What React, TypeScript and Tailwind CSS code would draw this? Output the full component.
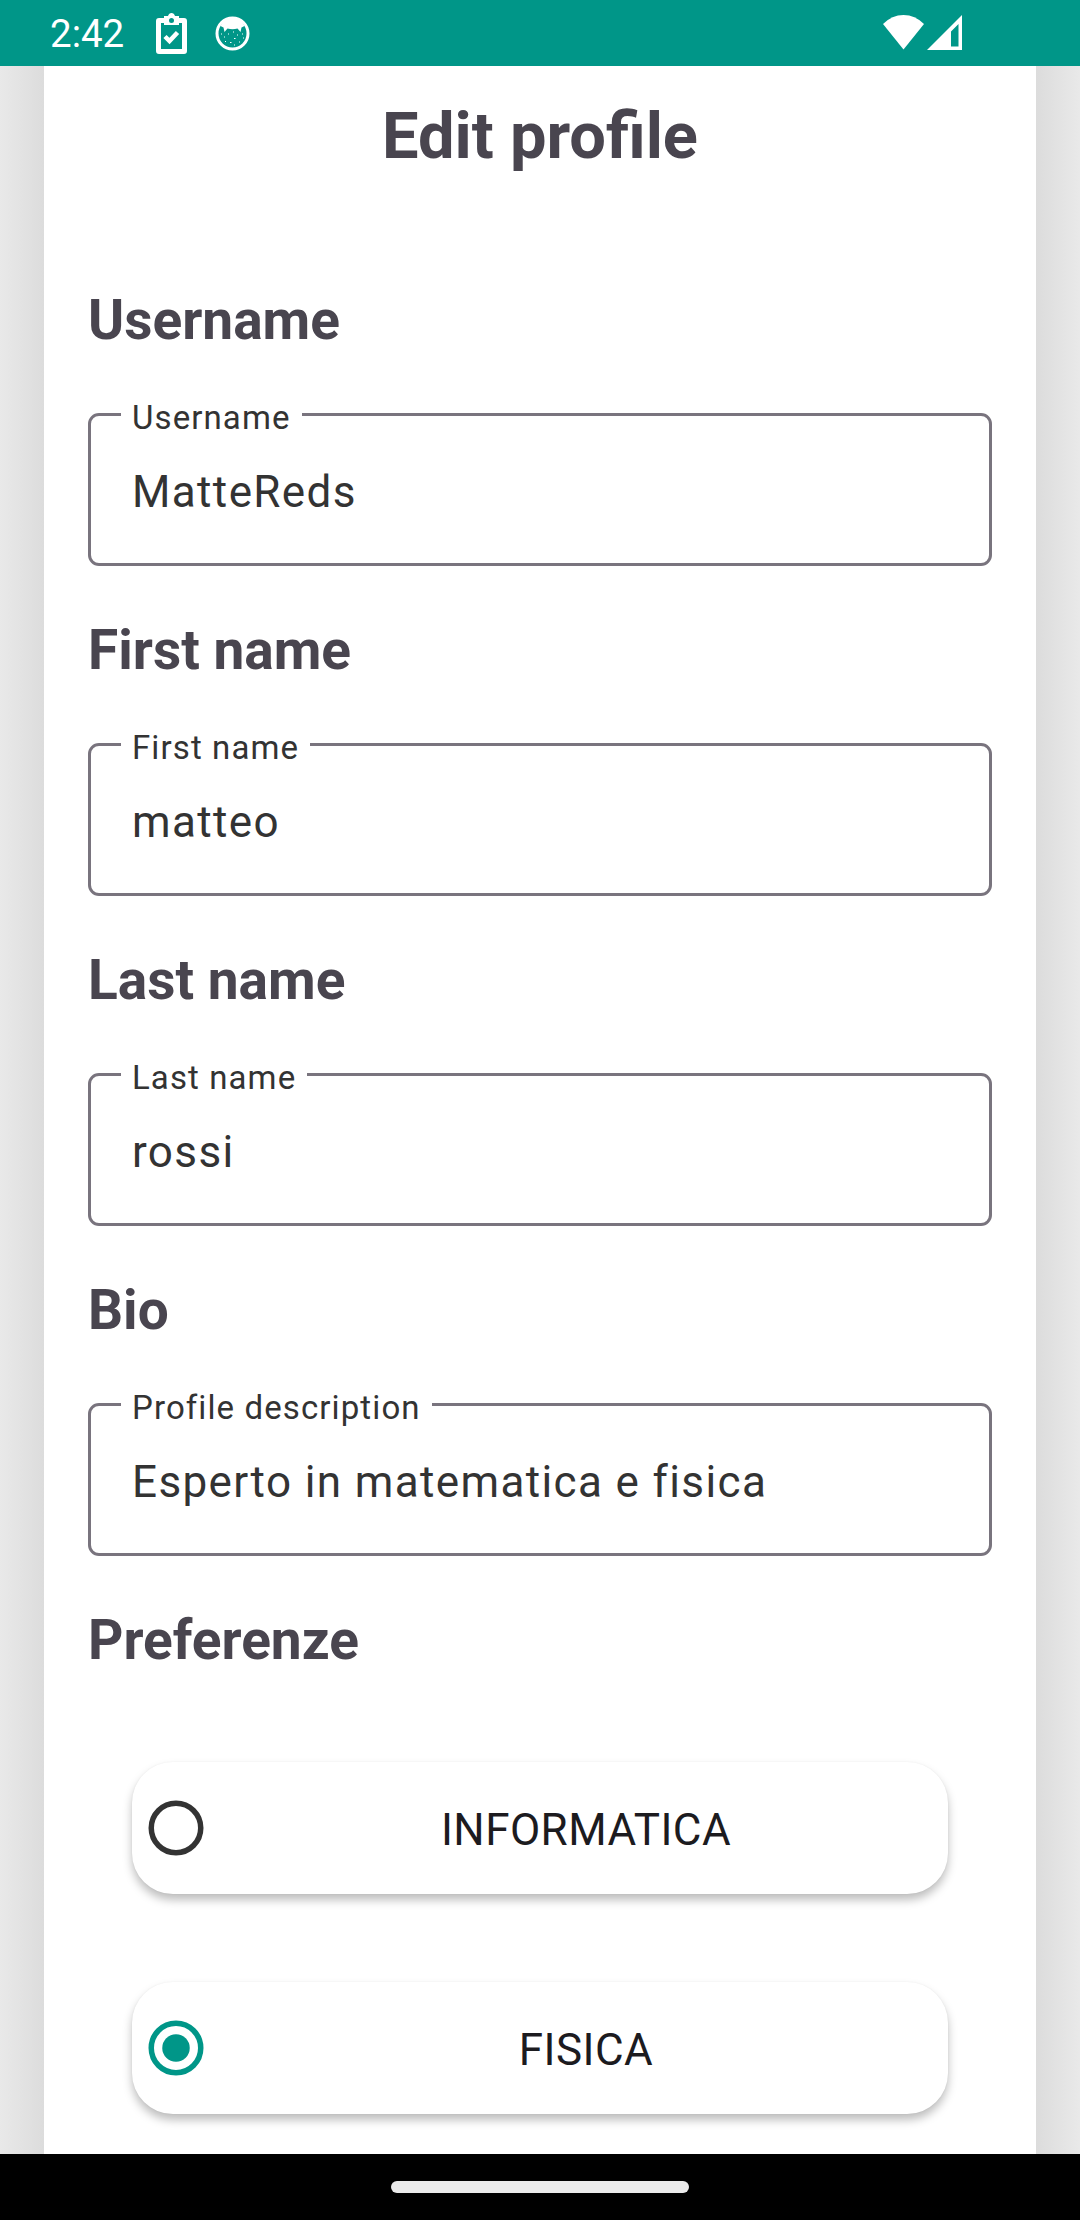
const fields = [
  { heading: "Username", label: "Username", value: "MatteReds" },
  { heading: "First name", label: "First name", value: "matteo" },
  { heading: "Last name", label: "Last name", value: "rossi" },
  { heading: "Bio", label: "Profile description", value: "Esperto in matematica e fisica" },
];

const options = [
  { name: "INFORMATICA", checked: false },
  { name: "FISICA", checked: true },
];

function StatusBar() {
  return (
    <header className="flex h-[66px] shrink-0 items-start bg-[#009688] pl-[50px] text-white">
      <span className="mt-[10px] w-[106px] text-[38.5px] leading-[47px]">2:42</span>
      <svg className="mt-[13px] h-[41px] w-[31px]" viewBox="0 0 31 41" fill="currentColor">
        <path
          fillRule="evenodd"
          d="M3 5H8V3H12Q13 0 15.500 0Q18 0 19 3H23V5H28Q31 5 31 8V38Q31 41 28 41H3Q0 41 0 38V8Q0 5 3 5ZM5 10V36H26V10H23V12H8V10ZM15.500 5A2.500 2.500 0 1 0 15.500 10A2.500 2.500 0 1 0 15.500 5Z"
        />
        <path d="M9 23.500L13.500 28L21.500 19.500" fill="none" stroke="currentColor" strokeWidth="4.500" />
      </svg>
      <svg className="mt-4 ml-[28px] h-[35px] w-[35px]" viewBox="0 0 35 35" fill="currentColor">
        <circle cx="17.500" cy="17.500" r="15.500" fill="none" stroke="currentColor" strokeWidth="3" />
        <path d="M5.500 10Q9 1.500 17.500 1.500Q26 1.500 29.500 10L26.500 11.500L25.500 16L22.500 12.500Q17.500 14 12.500 12.500L9.500 16L8.500 11.500Z" />
        <path
          d="M6 18h1M9 21h1M13 18h1M19 22.500h1.500M18 16h1M22 19h1M27 18h1M28 22h1M10 25.500h1M15 26.500h1.500M19 29h1M24 26h1"
          stroke="currentColor"
          strokeWidth="1.100"
        />
      </svg>
      <svg className="mt-[15px] ml-auto h-[35px] w-[41px]" viewBox="0 0 41 35" fill="currentColor">
        <path d="M0 9Q9 0 20.500 0Q32 0 41 9L20.500 34.500Z" />
      </svg>
      <svg className="mt-[15px] mr-[118px] ml-[3px] h-[35px] w-[35px]" viewBox="0 0 35 35" fill="currentColor">
        <path fillRule="evenodd" d="M35 0V35H0ZM31.500 9L24 16.500V31.500H31.500Z" />
      </svg>
    </header>
  );
}

function Heading({ children }: { children: string }) {
  return <h2 className="text-[55px] leading-[64px] font-bold text-[#49454f]">{children}</h2>;
}

function Field({ heading, label, value }: { heading: string; label: string; value: string }) {
  return (
    <section className="h-[330px]">
      <Heading>{heading}</Heading>
      <div className="relative mt-[61px] flex h-[153px] items-center rounded-[11px] border-[3px] border-[#79747e] pt-[5px] pl-[41px]">
        <span className="absolute -top-[18px] left-[30px] bg-white px-[11px] text-[33px] leading-[39px] tracking-[1.1px] text-[#333333]">
          {label}
        </span>
        <span className="text-[44px] leading-[52px] tracking-[1.375px] text-[#333333]">{value}</span>
      </div>
    </section>
  );
}

function Option({ name, checked }: { name: string; checked: boolean }) {
  return (
    <div
      className={
        "flex h-[132px] items-center rounded-[41px] bg-white pl-[11px] shadow-[0_6px_10px_rgba(0,0,0,0.26),0_0_2px_rgba(0,0,0,0.05)] " +
        (checked ? "text-[#009688]" : "text-[#333333]")
      }
    >
      <svg className="h-[66px] w-[66px] shrink-0" viewBox="0 0 24 24">
        <circle cx="12" cy="12" r="9" fill="none" stroke="currentColor" strokeWidth="2" />
        {checked && <circle cx="12" cy="12" r="5" fill="currentColor" />}
      </svg>
      <span className="flex-1 pt-[3px] pl-[15px] text-center text-[44px] leading-[52px] tracking-[0.44px] text-[#1c1b1f]">
        {name}
      </span>
    </div>
  );
}

export default function App() {
  return (
    <div className="flex h-[2220px] w-[1080px] flex-col overflow-hidden font-[Roboto,sans-serif]">
      <StatusBar />
      <main className="flex min-h-0 flex-1">
        <div className="w-11 bg-linear-to-r from-[#e9e9e9] to-[#dcdcdc]" />
        <div className="w-[992px] bg-white px-11 pt-8">
          <h1 className="text-center text-[65px] leading-[77px] font-bold text-[#49454f]">Edit profile</h1>
          <div className="mt-[113px]">
            {fields.map((f) => (
              <Field key={f.heading} {...f} />
            ))}
          </div>
          <Heading>Preferenze</Heading>
          <div className="mt-[90px] flex flex-col gap-[88px] px-11">
            {options.map((o) => (
              <Option key={o.name} {...o} />
            ))}
          </div>
        </div>
        <div className="w-11 bg-linear-to-l from-[#e9e9e9] to-[#dcdcdc]" />
      </main>
      <footer className="flex h-[66px] shrink-0 justify-center bg-black pt-[27px]">
        <div className="h-3 w-[298px] rounded-full bg-[#ebebeb]" />
      </footer>
    </div>
  );
}
